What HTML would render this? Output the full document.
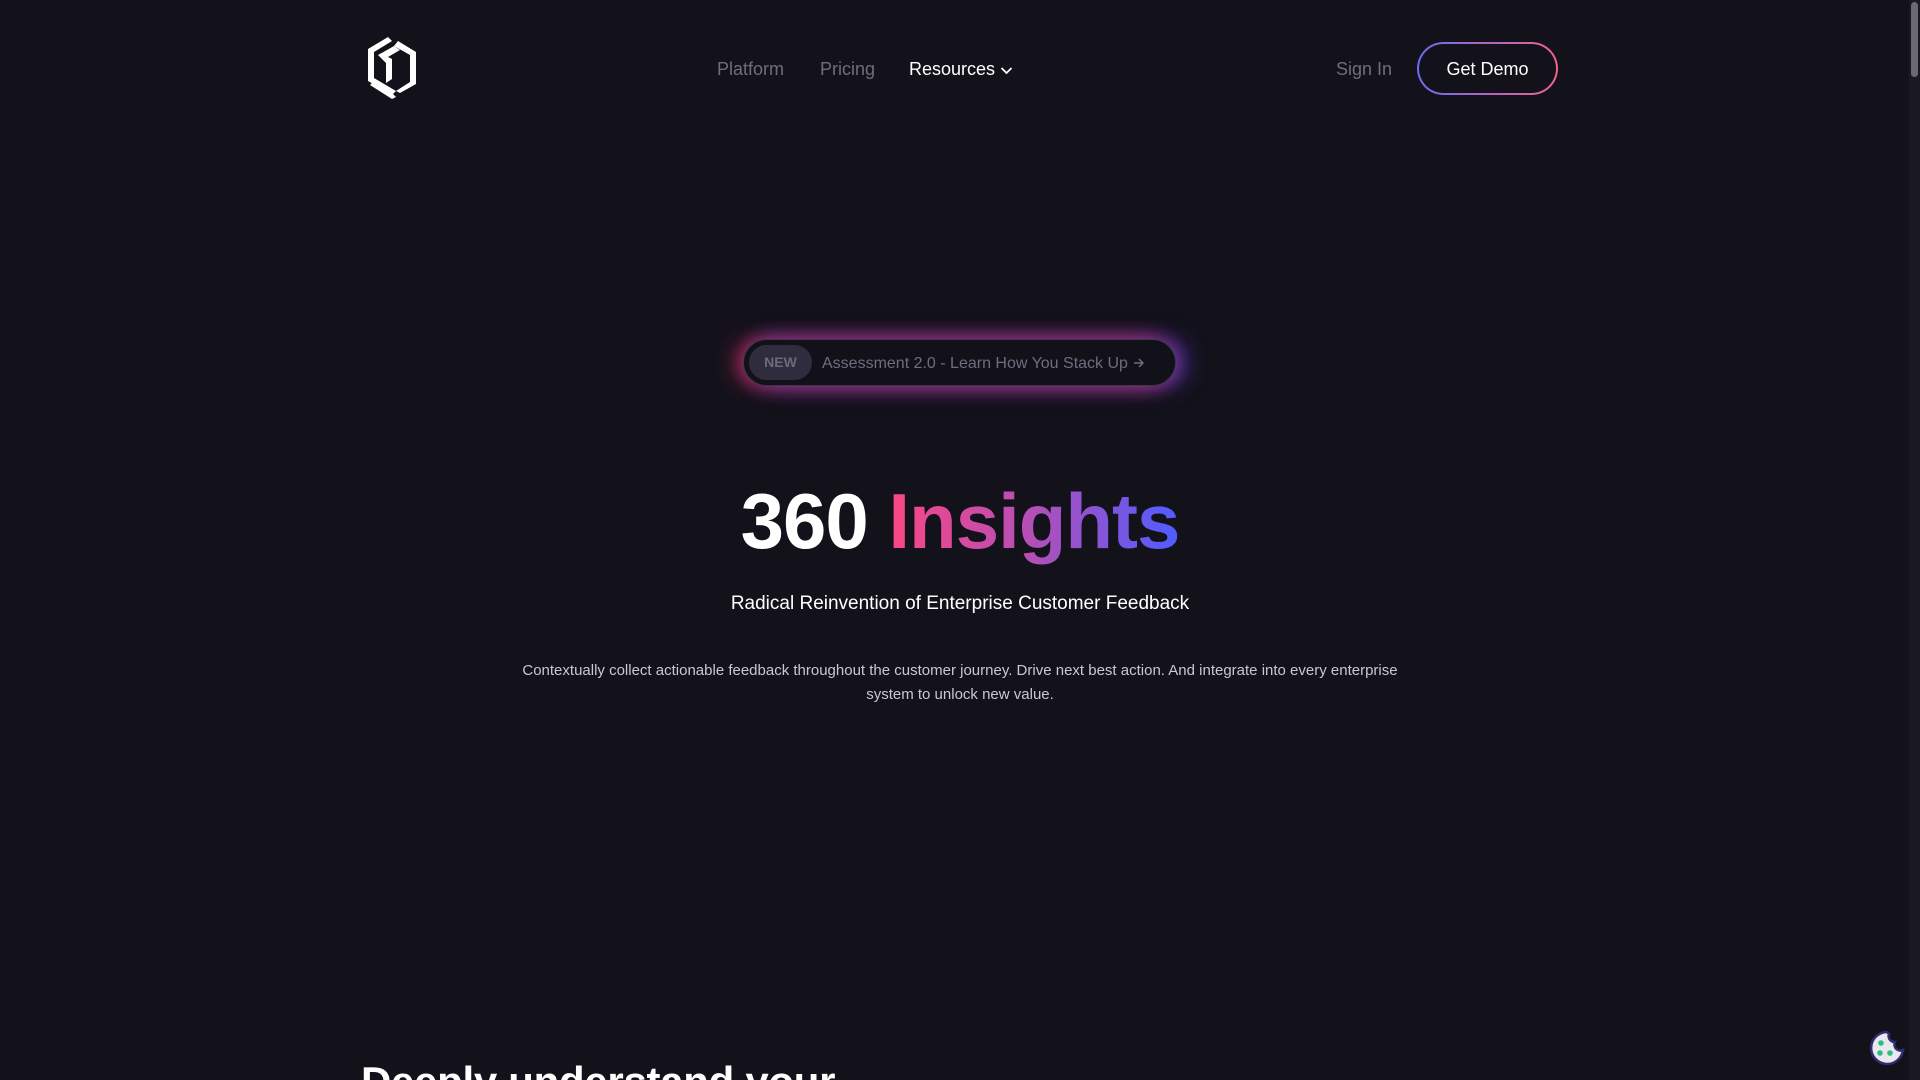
<!DOCTYPE html>
<html><head><meta charset="utf-8"><style>
html,body{margin:0;padding:0;width:1920px;height:1080px;overflow:hidden;background:#13121b;font-family:"Liberation Sans",sans-serif;}
#wrap{position:relative;width:1920px;height:1080px;overflow:hidden;}
.abs{position:absolute;white-space:nowrap;}
.nav{font-size:18px;color:#6f6d7d;top:59px;}
</style></head><body><div id="wrap">
<svg class="abs" style="left:364px;top:35px" width="60" height="66" viewBox="0 0 60 66">
<g fill="#fff">
<polygon points="24,2 4,14 4,46 28,60 32,56 10,43 10,17 28,6"/>
<polygon points="34,6 52,17 52,49 36,58 32,56 46,47 46,20 30,11"/>
<polygon points="14,20 30,11 36,15 24,22 28,24 28,44 22,48 22,28"/>
<polygon points="10,46 28,58 32,62 28,64 6,50"/>
</g></svg>
<div class="abs nav" style="left:717px">Platform</div>
<div class="abs nav" style="left:820px">Pricing</div>
<div class="abs nav" style="left:909px;color:#fff">Resources</div>
<svg class="abs" style="left:1000px;top:66px" width="13" height="9" viewBox="0 0 13 9"><path d="M1.5 2 L6.5 7 L11.5 2" stroke="#fff" stroke-width="1.8" fill="none"/></svg>
<div class="abs nav" style="left:1336px">Sign In</div>
<div class="abs" style="left:1417px;top:42px;width:141px;height:53px;border-radius:27px;background:linear-gradient(90deg,#6a6cf5,#f0628a);"></div>
<div class="abs" style="left:1419px;top:44px;width:137px;height:49px;border-radius:25px;background:#13121b;color:#fff;font-size:18px;text-align:center;line-height:50px;">Get Demo</div>
<div class="abs" style="left:743px;top:339px;width:433px;height:47px;border-radius:24px;background:#121119;border:1px solid #3a3845;box-sizing:border-box;box-shadow:-8px 0 22px rgba(235,50,90,.55),10px 0 22px rgba(110,70,240,.6),0 0 18px rgba(180,60,180,.45);"></div>
<div class="abs" style="left:749px;top:345px;width:63px;height:35px;border-radius:18px;background:#2f2d3d;color:#6c6a7c;font-size:14px;font-weight:bold;line-height:35px;text-align:center;">NEW</div>
<div class="abs" style="left:822px;top:355px;font-size:16px;color:#6f6d7f;">Assessment 2.0 - Learn How You Stack Up</div>
<svg class="abs" style="left:1133px;top:357px" width="12" height="12" viewBox="0 0 12 12"><path d="M1 6 H10 M6 2 L10 6 L6 10" stroke="#6f6d7f" stroke-width="1.5" fill="none"/></svg>
<div class="abs" style="left:0;width:1920px;text-align:center;top:471px;font-size:78px;font-weight:bold;color:#fff;line-height:100px;letter-spacing:-1px;">360 <span style="background:linear-gradient(90deg,#fb4783,#b24fb8 50%,#4f5cff);-webkit-background-clip:text;background-clip:text;color:transparent;">Insights</span></div>
<div class="abs" style="left:0;width:1920px;text-align:center;top:593px;font-size:19px;color:#fff;">Radical Reinvention of Enterprise Customer Feedback</div>
<div class="abs" style="left:0;width:1920px;text-align:center;top:659px;font-size:15px;color:#c9c8d2;line-height:24px;white-space:normal;">Contextually collect actionable feedback throughout the customer journey. Drive next best action. And integrate into every enterprise<br>system to unlock new value.</div>
<div class="abs" style="left:361px;top:1058px;font-size:42px;font-weight:bold;color:#fff;letter-spacing:-0.3px;">Deeply understand your</div>
<div class="abs" style="left:1909px;top:0;width:11px;height:1080px;background:#1a1922;"></div>
<div class="abs" style="left:1911px;top:2px;width:7px;height:75px;border-radius:4px;background:#6b6a72;"></div>
<svg class="abs" style="left:1867px;top:1028px" width="40" height="40" viewBox="0 0 40 40">
<path d="M20 4 A16 16 0 1 0 36 22 A6 6 0 0 1 28 14 A6 6 0 0 1 22 6 Z" fill="#e9e8ef" stroke="#2e2b6e" stroke-width="2.5"/>
<circle cx="14" cy="15" r="2.8" fill="#2bbf7f"/><circle cx="13" cy="25" r="2.8" fill="#2bbf7f"/><circle cx="23" cy="25" r="2.8" fill="#2bbf7f"/>
</svg>
</div></body></html>
